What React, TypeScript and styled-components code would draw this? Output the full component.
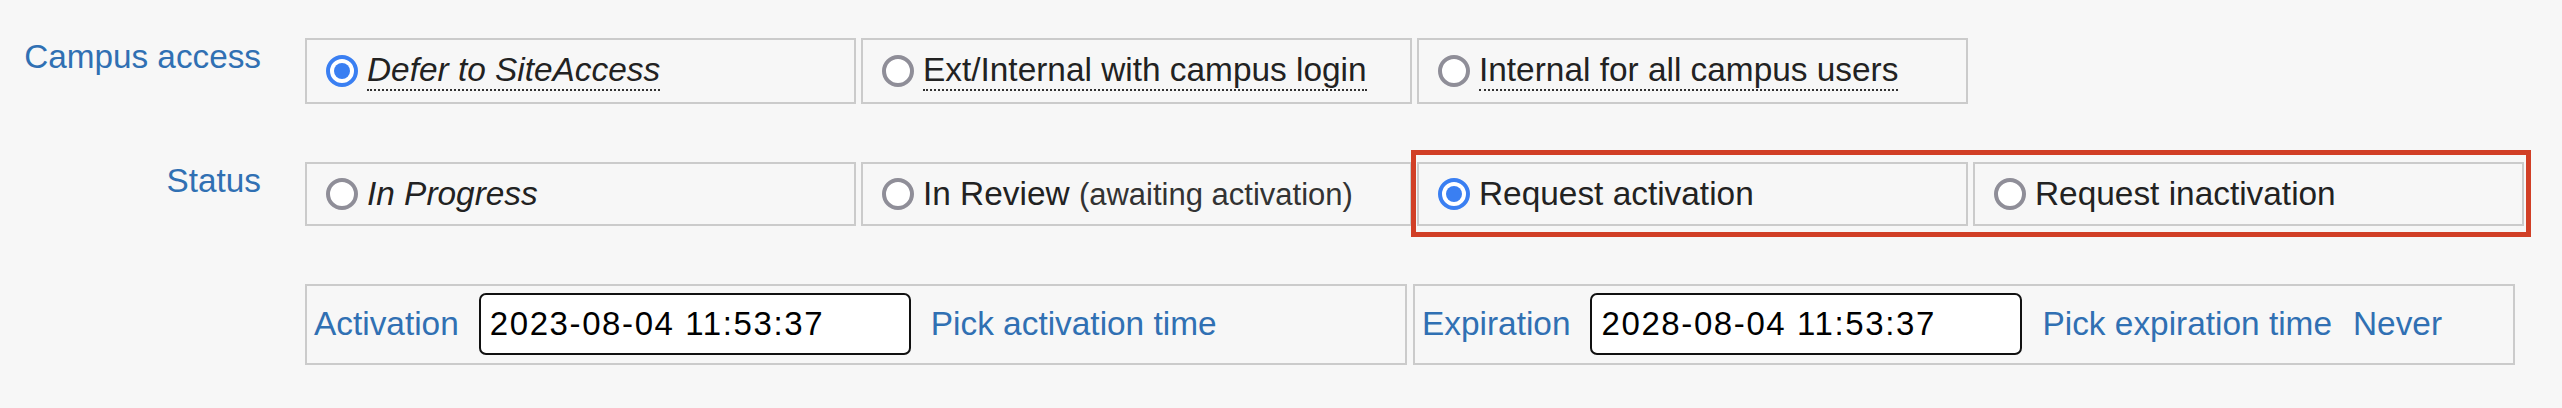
import React from 'react';
import styled, { createGlobalStyle } from 'styled-components';

const GlobalStyle = createGlobalStyle`
  body {
    margin: 0;
    background: #f7f7f7;
    font-family: "Liberation Sans", Arial, Helvetica, sans-serif;
    color: #222;
  }
`;

const Page = styled.div`
  display: grid;
  grid-template-columns: 261px auto;
  column-gap: 44px;
  row-gap: 58px;
  align-items: start;
  padding-top: 38px;
`;

const FieldLabel = styled.div`
  grid-column: 1;
  text-align: right;
  color: #3070b3;
  font-size: 33.3px;
  line-height: normal;
`;

const ChoiceRow = styled.div`
  grid-column: 2;
  display: grid;
  grid-template-columns: repeat(4, 551px);
  column-gap: 5px;
`;

const Choice = styled.label<{ $col: number }>`
  grid-row: 1;
  grid-column: ${(p) => p.$col};
  display: flex;
  align-items: center;
  gap: 9px;
  padding: 11px 19px;
  border: 2px solid #cbcbcb;
  font-size: 33.4px;
  line-height: normal;
  white-space: nowrap;
`;

const Radio = styled.span<{ $checked?: boolean }>`
  position: relative;
  flex: none;
  width: 32px;
  height: 32px;
  box-sizing: border-box;
  border-radius: 50%;
  background: #fff;
  border: 4px solid ${(p) => (p.$checked ? '#3a7ff2' : '#8f8e98')};

  &::after {
    content: '';
    display: ${(p) => (p.$checked ? 'block' : 'none')};
    position: absolute;
    inset: 4px;
    border-radius: 50%;
    background: #3a7ff2;
  }
`;

const ChoiceText = styled.span<{ $italic?: boolean; $dotted?: boolean }>`
  display: inline-block;
  font-style: ${(p) => (p.$italic ? 'italic' : 'normal')};
  border-bottom: ${(p) => (p.$dotted ? '2px dotted #333' : 'none')};
`;

const Hint = styled.span`
  font-size: 31px;
  color: #333;
`;

// red annotation frame drawn over the last two status choices
const Highlight = styled.div`
  grid-column: 3 / 5;
  grid-row: 1;
  margin: -12px -7px -11px -6px;
  border: 5px solid #d13f26;
  pointer-events: none;
`;

const DateRow = styled.div`
  grid-column: 2;
  display: grid;
  grid-template-columns: 1102px 1102px;
  column-gap: 6px;
`;

const DateCell = styled.div`
  display: flex;
  align-items: center;
  gap: 20px;
  padding: 7px 7px 8px;
  border: 2px solid #cbcbcb;
  font-size: 33.4px;
  white-space: nowrap;
`;

const LinkText = styled.a`
  color: #3070b3;
  text-decoration: none;
  cursor: pointer;
`;

const LinkGroup = styled.span`
  display: flex;
  gap: 21px;
`;

const DateInput = styled.input`
  width: 432px;
  height: 62px;
  box-sizing: border-box;
  padding: 0 9px;
  border: 2px solid #111;
  border-radius: 7px;
  background: #fff;
  font-family: "Liberation Sans", Arial, sans-serif;
  font-size: 33px;
  letter-spacing: 1.6px;
  color: #000;
  outline: none;
`;

const App = () => {
  return (
    <>
      <GlobalStyle />
      <Page>
        <FieldLabel>Campus access</FieldLabel>
        <ChoiceRow>
          <Choice $col={1}>
            <Radio $checked />
            <ChoiceText $italic $dotted>Defer to SiteAccess</ChoiceText>
          </Choice>
          <Choice $col={2}>
            <Radio />
            <ChoiceText $dotted>Ext/Internal with campus login</ChoiceText>
          </Choice>
          <Choice $col={3}>
            <Radio />
            <ChoiceText $dotted>Internal for all campus users</ChoiceText>
          </Choice>
        </ChoiceRow>

        <FieldLabel>Status</FieldLabel>
        <ChoiceRow>
          <Choice $col={1}>
            <Radio />
            <ChoiceText $italic>In Progress</ChoiceText>
          </Choice>
          <Choice $col={2}>
            <Radio />
            <ChoiceText>
              In Review <Hint>(awaiting activation)</Hint>
            </ChoiceText>
          </Choice>
          <Choice $col={3}>
            <Radio $checked />
            <ChoiceText>Request activation</ChoiceText>
          </Choice>
          <Choice $col={4}>
            <Radio />
            <ChoiceText>Request inactivation</ChoiceText>
          </Choice>
          <Highlight />
        </ChoiceRow>

        <DateRow>
          <DateCell>
            <LinkText>Activation</LinkText>
            <DateInput readOnly value="2023-08-04 11:53:37" />
            <LinkText>Pick activation time</LinkText>
          </DateCell>
          <DateCell>
            <LinkText>Expiration</LinkText>
            <DateInput readOnly value="2028-08-04 11:53:37" />
            <LinkGroup>
              <LinkText>Pick expiration time</LinkText>
              <LinkText>Never</LinkText>
            </LinkGroup>
          </DateCell>
        </DateRow>
      </Page>
    </>
  );
};

export default App;
